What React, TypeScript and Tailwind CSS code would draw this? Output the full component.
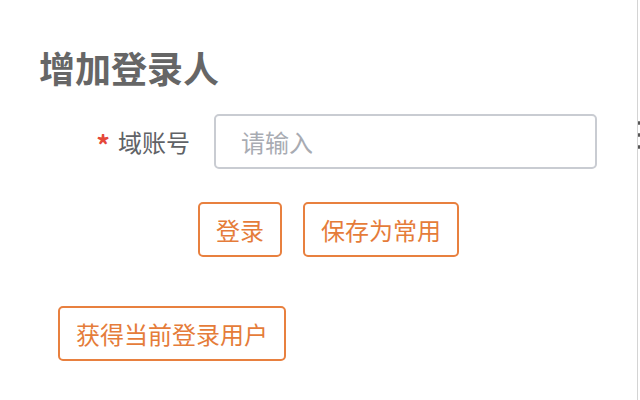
export default function App() {
  const font = { fontFamily: '"Noto Sans CJK SC", "Noto Sans", sans-serif' };

  return (
    <div className="flex h-[400px] w-[640px] overflow-hidden bg-white" style={font}>
      {/* Dialog body */}
      <div className="w-[638px] shrink-0 border-r border-[#d4d4d4] pl-[39px] pt-[45px]">
        <h2 className="text-[36px] font-bold leading-[44px] text-[#666666]">增加登录人</h2>

        {/* Form row */}
        <div className="mt-[25px] flex items-center">
          <label className="flex w-[175px] items-center justify-end pr-[24px] text-[24px] leading-none text-[#606266]">
            <span className="mt-[6px] mr-[8px] text-[27px] font-bold text-[#e5483a]">*</span>
            域账号
          </label>
          <input
            placeholder="请输入"
            className="h-[55px] w-[383px] rounded-[5px] border-2 border-[#c9ccd2] px-[25px] text-[24px] text-[#606266] outline-none placeholder:text-[#a8abb2]"
          />
        </div>

        {/* Actions */}
        <div className="mt-[33px] flex gap-[21px] pl-[159px]">
          <button className="h-[55px] rounded-[5px] border-2 border-[#e8803f] px-[16px] text-[24px] leading-none text-[#e57c3a]">
            登录
          </button>
          <button className="h-[55px] rounded-[5px] border-2 border-[#e8803f] px-[16px] text-[24px] leading-none text-[#e57c3a]">
            保存为常用
          </button>
        </div>

        <div className="mt-[49px] pl-[19px]">
          <button className="h-[55px] rounded-[5px] border-2 border-[#e8803f] px-[16px] text-[24px] leading-none text-[#e57c3a]">
            获得当前登录用户
          </button>
        </div>
      </div>

      {/* Edge of the page behind the dialog */}
      <div className="flex w-[2px] flex-col gap-[8px] pt-[121px]">
        <span className="h-[4px] w-[2px] rounded-full bg-[#555555]" />
        <span className="h-[4px] w-[2px] rounded-full bg-[#555555]" />
        <span className="h-[4px] w-[2px] rounded-full bg-[#555555]" />
      </div>
    </div>
  );
}
